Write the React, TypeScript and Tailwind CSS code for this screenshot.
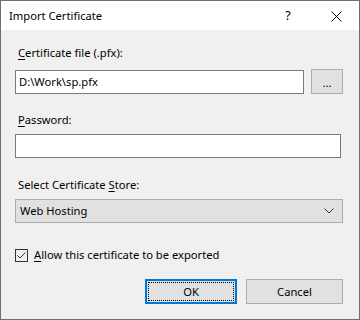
import {} from 'react';

const font = { fontFamily: '"Noto Sans", sans-serif' };

function U({ c }: { c: string }) {
  return <span className="underline underline-offset-2 decoration-1">{c}</span>;
}

export default function App() {
  return (
    <div
      className="w-[360px] h-[320px] border border-[#6f6f6f] bg-[#f0f0f0] flex flex-col text-[11.2px] leading-[16px] text-black"
      style={font}
    >
      {/* title bar */}
      <div className="h-[29px] bg-white flex items-center pl-[8px] pr-[17px]">
        <span className="flex-1 pt-[1px]">Import Certificate</span>
        <span className="w-[10px] text-center text-[12.5px] mr-[38px]">?</span>
        <svg width="11" height="11" viewBox="0 0 11 11" className="mt-[1px]">
          <path d="M0.5 0.5 L10.5 10.5 M10.5 0.5 L0.5 10.5" stroke="#000" strokeWidth="1" />
        </svg>
      </div>

      <div className="flex flex-col pl-[14px] pr-[16px]">
        <div className="mt-[15px] pl-[3px]">
          <U c="C" />ertificate file (.pfx):
        </div>
        <div className="mt-[8px] flex items-center">
          <div className="w-[289px] h-[24px] bg-white border border-[#7a7a7a] flex items-center px-[3px]">
            D:\Work\sp.pfx
          </div>
          <div className="ml-[7px] w-[32px] h-[25px] bg-[#e1e1e1] border border-[#adadad] flex items-center justify-center pt-[2px]">
            ...
          </div>
        </div>

        <div className="mt-[18px] pl-[3px]">
          <U c="P" />assword:
        </div>
        <div className="mt-[6px] w-[326px] h-[24px] bg-white border border-[#7a7a7a]" />

        <div className="mt-[19px] pl-[3px]">
          Select Certificate <U c="S" />tore:
        </div>
        <div className="mt-[6px] w-[328px] h-[24px] bg-[#e1e1e1] border border-[#adadad] flex items-center pl-[4px] pr-[8px]">
          <span className="flex-1">Web Hosting</span>
          <svg width="10" height="6" viewBox="0 0 10 6">
            <path d="M0.5 0.5 L5 5 L9.5 0.5" stroke="#333" strokeWidth="1" fill="none" />
          </svg>
        </div>

        <div className="mt-[24px] flex items-center">
          <div className="w-[13px] h-[13px] border border-[#333] bg-[#f0f0f0] flex items-center justify-center">
            <svg width="11" height="11" viewBox="0 0 11 11">
              <path d="M1.5 5.5 L4 8 L9.5 2.5" stroke="#333" strokeWidth="1" fill="none" />
            </svg>
          </div>
          <span className="ml-[6px]">
            <U c="A" />llow this certificate to be exported
          </span>
        </div>

        <div className="mt-[16px] flex justify-end pr-[0px]">
          <div className="w-[92px] h-[25px] border-2 border-[#0078d7] bg-[#e1e1e1] p-[1px]">
            <div className="w-full h-full border border-dotted border-black flex items-center justify-center">
              OK
            </div>
          </div>
          <div className="ml-[9px] w-[97px] h-[25px] border border-[#adadad] bg-[#e1e1e1] flex items-center justify-center">
            Cancel
          </div>
        </div>
      </div>
    </div>
  );
}
